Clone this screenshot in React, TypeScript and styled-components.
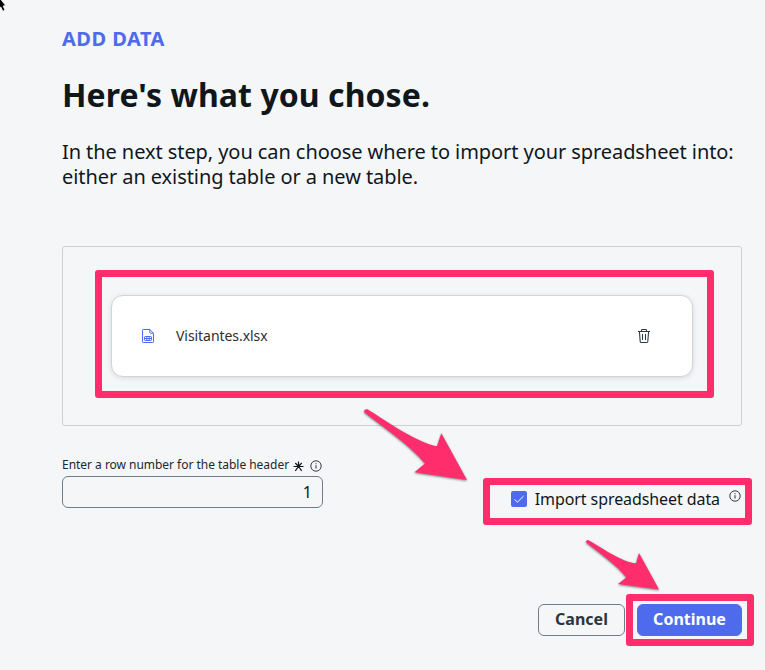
import React from 'react';
import styled, { createGlobalStyle } from 'styled-components';

const PINK = '#ff2d6c';

const GlobalStyle = createGlobalStyle`
  *, *::before, *::after { box-sizing: border-box; }
  body {
    margin: 0;
    background: #f4f6f8;
    color: #10171b;
    font-family: 'Noto Sans', 'Open Sans', sans-serif;
  }
  button, input { font-family: inherit; }
`;

const Page = styled.main`
  position: relative;
  width: 765px;
  height: 670px;
  padding: 26px 23px 0 62px;
  overflow: hidden;
  white-space: nowrap;
`;

const Eyebrow = styled.div`
  font-size: 20px;
  font-weight: 700;
  line-height: 25px;
  letter-spacing: 0.48px;
  color: #4f6bed;
`;

const Title = styled.h1`
  margin: 24px 0 0;
  font-size: 32px;
  font-weight: 700;
  line-height: 40px;
  letter-spacing: 0.07px;
`;

const Intro = styled.p`
  margin: 24px 0 0;
  font-size: 20px;
  line-height: 25px;
  letter-spacing: -0.075px;
`;

const DropArea = styled.section`
  display: flex;
  align-items: center;
  justify-content: center;
  height: 180px;
  margin-top: 57px;
  border: 1px solid #cbd0d4;
  border-radius: 3px;
`;

const FileCard = styled.div`
  display: flex;
  align-items: center;
  width: 582px;
  height: 82px;
  padding: 0 40px 0 28px;
  background: #fff;
  border: 1px solid #cfd5d9;
  border-radius: 12px;
  box-shadow: 0 1px 5px rgba(30, 45, 55, 0.13);
`;

const FileName = styled.span`
  flex: 1;
  margin-left: 20px;
  font-size: 14px;
  line-height: 20px;
  letter-spacing: -0.06px;
  color: #2e2e2e;
`;

const Options = styled.section`
  display: flex;
  justify-content: space-between;
  margin-top: 30px;
  height: 52px;
`;

const Field = styled.div`
  display: flex;
  flex-direction: column;
  width: 261px;
`;

const FieldLabel = styled.label`
  display: flex;
  align-items: center;
  height: 20px;
  font-size: 12px;
  line-height: 16px;
  letter-spacing: -0.03px;
  color: #1d272c;
  padding-bottom: 2px;

  svg { margin: 2px 0 0 4px; }
  svg + svg { margin: 1px 0 0 5.5px; }
`;

const NumberInput = styled.input`
  width: 261px;
  height: 32px;
  padding: 0 10px;
  border: 1px solid #6e7e85;
  border-radius: 6px;
  background: transparent;
  color: #10171b;
  font-size: 16px;
  line-height: 22px;
  text-align: right;
`;

const CheckOption = styled.div`
  display: flex;
  align-items: center;
  height: 22px;
  margin: 32px 1.5px 0 0;
  font-size: 16px;
  line-height: 22px;
  letter-spacing: -0.085px;
`;

const CheckBox = styled.span`
  display: grid;
  place-items: center;
  width: 16px;
  height: 16px;
  margin-right: 8px;
  border-radius: 2px;
  background: #4f6bed;
`;

const RaisedInfo = styled.span`
  display: flex;
  margin: -7px 0 0 8.5px;
`;

const Actions = styled.footer`
  display: flex;
  justify-content: flex-end;
  gap: 12px;
  margin-top: 96px;
`;

const Button = styled.button<{ $primary?: boolean }>`
  width: ${(p) => (p.$primary ? 105 : 87)}px;
  height: 32px;
  padding: 0 0 2px;
  border: 1px solid ${(p) => (p.$primary ? '#4f6bed' : '#6e7e85')};
  border-radius: 6px;
  background: ${(p) => (p.$primary ? '#4f6bed' : 'transparent')};
  color: ${(p) => (p.$primary ? '#fff' : '#2b363b')};
  font-size: 16px;
  font-weight: 700;
  line-height: 22px;
`;

const Highlight = styled.div<{ $x: number; $y: number; $w: number; $h: number }>`
  position: absolute;
  left: ${(p) => p.$x}px;
  top: ${(p) => p.$y}px;
  width: ${(p) => p.$w}px;
  height: ${(p) => p.$h}px;
  border: 7px solid ${PINK};
  border-radius: 3px;
  pointer-events: none;
`;

const Overlay = styled.svg`
  position: absolute;
  inset: 0;
  pointer-events: none;

  .arrow { filter: drop-shadow(0 1.5px 1.2px rgba(0, 0, 0, 0.5)); }
`;

const SpreadsheetIcon = () => (
  <svg width="16" height="16" viewBox="0 0 16 16" fill="none" stroke="#4f6bed">
    <path d="M9.800 1.500H3.200Q2.500 1.500 2.500 2.200V13.800Q2.500 14.500 3.200 14.500H12.800Q13.500 14.500 13.500 13.800V5.200L9.800 1.500V4.500Q9.800 5.200 10.500 5.200H13.500" />
    <path d="M5.200 8.500H10.800Q11.500 8.500 11.500 9.200V11.800Q11.500 12.500 10.800 12.500H5.200Q4.500 12.500 4.500 11.800V9.200Q4.500 8.500 5.200 8.500ZM4.500 10.500H11.500M6.800 8.500V12.500M9.200 8.500V12.500" />
  </svg>
);

const TrashIcon = () => (
  <svg width="16" height="16" viewBox="0 0 16 16" fill="none" stroke="#303c42" strokeWidth="1.1">
    <path d="M2 3.500H14M5.500 3.500V2.200Q5.500 1.500 6.200 1.500H9.800Q10.500 1.500 10.500 2.200V3.500M3.400 3.500L4.200 13.500Q4.300 14.500 5.200 14.500H10.800Q11.700 14.500 11.800 13.500L12.600 3.500M6.500 6V12M9.500 6V12" />
  </svg>
);

const InfoIcon = () => (
  <svg width="12" height="12" viewBox="0 0 12 12" fill="none" stroke="#27333a">
    <circle cx="6" cy="6" r="5.2" strokeWidth="0.95" />
    <path d="M6 5.200V8.600M6 3.200V4.200" />
  </svg>
);

const RequiredIcon = () => (
  <svg width="11" height="11" viewBox="0 0 11 11" fill="none" stroke="#10171b" strokeWidth="1.2">
    <path d="M5.500 0.500V5.500M0.500 5.500H10.500M5.500 5.500L2.300 9.800M5.500 5.500L8.700 9.800M5.500 5.500L2.300 2M5.500 5.500L8.700 2" />
  </svg>
);

export default function App() {
  return (
    <>
      <GlobalStyle />
      <Page>
        <Eyebrow>ADD DATA</Eyebrow>
        <Title>Here's what you chose.</Title>
        <Intro>
          In the next step, you can choose where to import your spreadsheet into:
          <br />
          either an existing table or a new table.
        </Intro>
        <DropArea>
          <FileCard>
            <SpreadsheetIcon />
            <FileName>Visitantes.xlsx</FileName>
            <TrashIcon />
          </FileCard>
        </DropArea>
        <Options>
          <Field>
            <FieldLabel htmlFor="header-row">
              Enter a row number for the table header
              <RequiredIcon />
              <InfoIcon />
            </FieldLabel>
            <NumberInput id="header-row" defaultValue="1" />
          </Field>
          <CheckOption>
            <CheckBox role="checkbox" aria-checked="true">
              <svg width="12" height="12" viewBox="0 0 12 12" fill="none" stroke="#fff">
                <path d="M1.500 6.300L4.400 9.200L10.500 3.100" />
              </svg>
            </CheckBox>
            Import spreadsheet data
            <RaisedInfo>
              <InfoIcon />
            </RaisedInfo>
          </CheckOption>
        </Options>
        <Actions>
          <Button>Cancel</Button>
          <Button $primary>Continue</Button>
        </Actions>
        <Highlight $x={95} $y={270} $w={619} $h={128} />
        <Highlight $x={483} $y={478} $w={269} $h={47} />
        <Highlight $x={626} $y={594} $w={128} $h={52} />
        <Overlay width="765" height="670" viewBox="0 0 765 670">
          <path
            className="arrow"
            fill={PINK}
            d="M367.500 409.300C382 418.500 418 443.500 437 446.300L441.300 433.300L467 480L414.500 472.300L425 463.500C411 446 381 425.500 364.500 412.500Q363 409 367.500 409.300Z"
          />
          <path
            className="arrow"
            fill={PINK}
            d="M588 540C600 546.500 622 562.500 636 563.300L639 553L659 589.500L618 584L626.300 577.500C617 565 598 552 586.200 542.500Q585.500 540 588 540Z"
          />
          <path d="M-1 -3L5.700 5.600L3.200 6L5 10.300L2.800 11.200L0.800 7L-1 8.500Z" fill="#000" stroke="#fff" strokeWidth="0.8" />
        </Overlay>
      </Page>
    </>
  );
}
